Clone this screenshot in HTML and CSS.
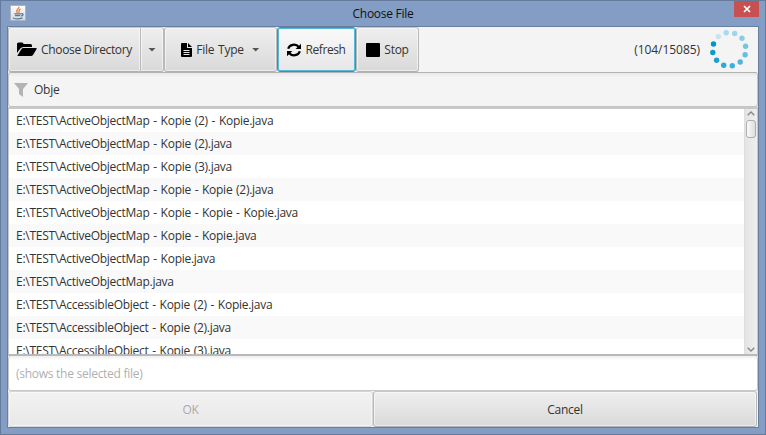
FILE: index.html
```html
<!DOCTYPE html>
<html lang="en">
<head>
<meta charset="utf-8">
<title>Choose File</title>
<link rel="stylesheet" href="styles.css">
</head>
<body>
<div class="window">
  <header class="titlebar">
    <svg class="app-icon" width="16" height="16" viewBox="0 0 16 16">
      <defs><linearGradient id="tile" x1="0" y1="0" x2="0" y2="1"><stop offset="0" stop-color="#fff"/><stop offset="1" stop-color="#d4d8dc"/></linearGradient></defs>
      <rect x=".5" y=".5" width="15" height="15" rx="1" fill="url(#tile)" stroke="#a9b4bf"/>
      <path d="M8.800 1.800C9.600 4 5 4.600 7.300 8M10.600 3.800C8 5 9.800 5.800 8.700 8" fill="none" stroke="#e8843c" stroke-width="1.300"/>
      <path d="M4.300 8.800h6.500M5 10.700h5.300M3 13c2.500 1 7 .9 9.500-.2M11 8.800c3-.8 2.500 1.800.2 2.200" fill="none" stroke="#527c9d" stroke-width="1.300"/>
    </svg>
    <h1 class="title">Choose File</h1>
    <button class="close" aria-label="Close"><svg width="8" height="8" viewBox="0 0 8 8"><path d="M1 1l6 6M7 1L1 7" stroke="#fff" stroke-width="1.700"/></svg></button>
  </header>
  <main class="content">
    <div class="toolbar">
      <button class="btn directory">
        <svg width="20" height="15" viewBox="0 0 20 15"><path d="M0 11V2Q0 .5 1.500 .5H5Q6.500.5 6.500 2H13.500Q15 2 15 3.500V5H6.500Q4.500 5 3.300 6.500Z"/><path d="M.5 13.500L4.300 7.300Q5 6 6.500 6H19Q20.300 6 19.500 7.300L16.300 12.500Q15.300 14 14 14H1Q.2 14 .5 13.500Z"/></svg>
        <span>Choose Directory</span>
      </button>
      <button class="btn arrow" aria-label="More"><i class="caret"></i></button>
      <button class="btn type">
        <svg width="11" height="14" viewBox="0 0 11 14"><path d="M0 1Q0 0 1 0H6V5H11V13Q11 14 10 14H1Q0 14 0 13Z"/><path d="M7 0L11 4H7Z"/><path d="M2.500 7.500h6M2.500 9.500h6M2.500 11.500h6" stroke="#e8e8e8"/></svg>
        <span>File Type</span><i class="caret"></i>
      </button>
      <button class="btn refresh">
        <svg width="14" height="14" viewBox="0 0 14 14"><path d="M1.200 5.800A5.900 5.300 0 0 1 11.800 4M12.800 8.200A5.900 5.300 0 0 1 2.200 10" fill="none" stroke="#000" stroke-width="2.200"/><path d="M14 .8V6H8.600ZM0 13.200V8H5.400Z"/></svg>
        <span>Refresh</span>
      </button>
      <button class="btn stop"><i class="square"></i><span>Stop</span></button>
      <span class="count">(104/15085)</span>
      <svg class="spinner" width="40" height="40" viewBox="0 0 40 40">
        <circle cx="17.200" cy="3.700" r="2.700" fill="#addaea"/>
        <circle cx="25.700" cy="4.500" r="2.700" fill="#9fd5e8"/>
        <circle cx="33" cy="9.300" r="2.700" fill="#8bcde5"/>
        <circle cx="36.600" cy="17.300" r="2.700" fill="#75c5e0"/>
        <circle cx="36.100" cy="25.800" r="2.700" fill="#65bedf"/>
        <circle cx="31.200" cy="33" r="2.700" fill="#50b5da"/>
        <circle cx="23.300" cy="36.800" r="2.700" fill="#40aed7"/>
        <circle cx="14.700" cy="36.200" r="2.700" fill="#2fa8d4"/>
        <circle cx="7.600" cy="31.300" r="2.700" fill="#1ea0d1"/>
        <circle cx="3.800" cy="23.500" r="2.700" fill="#109bce"/>
        <circle cx="4.500" cy="15" r="2.700" fill="#0096cb"/>
        <circle cx="9.300" cy="7.600" r="2.700" fill="#c5e4ee"/>
      </svg>
    </div>
    <div class="filter">
      <svg width="14" height="14" viewBox="0 0 14 14"><path d="M0 0H14L9 6V14L5 11V6Z"/></svg>
      <span>Obje</span>
    </div>
    <div class="list">
      <ul class="rows">
        <li><span>E:\TEST\ActiveObjectMap - Kopie (2) - Kopie.java</span></li>
        <li><span>E:\TEST\ActiveObjectMap - Kopie (2).java</span></li>
        <li><span>E:\TEST\ActiveObjectMap - Kopie (3).java</span></li>
        <li><span>E:\TEST\ActiveObjectMap - Kopie - Kopie (2).java</span></li>
        <li><span>E:\TEST\ActiveObjectMap - Kopie - Kopie - Kopie.java</span></li>
        <li><span>E:\TEST\ActiveObjectMap - Kopie - Kopie.java</span></li>
        <li><span>E:\TEST\ActiveObjectMap - Kopie.java</span></li>
        <li><span>E:\TEST\ActiveObjectMap.java</span></li>
        <li><span>E:\TEST\AccessibleObject - Kopie (2) - Kopie.java</span></li>
        <li><span>E:\TEST\AccessibleObject - Kopie (2).java</span></li>
        <li><span>E:\TEST\AccessibleObject - Kopie (3).java</span></li>
      </ul>
      <div class="scrollbar">
        <svg width="8" height="5" viewBox="0 0 8 5"><path d="M.7 4.300L4 1L7.300 4.300"/></svg>
        <div class="thumb"></div>
        <svg class="down" width="8" height="5" viewBox="0 0 8 5"><path d="M.7 .7L4 4L7.300 .7"/></svg>
      </div>
    </div>
    <div class="selected">(shows the selected file)</div>
    <footer class="actions">
      <button class="btn ok" disabled>OK</button>
      <button class="btn cancel">Cancel</button>
    </footer>
  </main>
</div>
</body>
</html>
```
FILE: styles.css
```css
* { box-sizing: border-box; }
body {
  margin: 0;
  font: 12px/16px "Open Sans", "Noto Sans", sans-serif;
  letter-spacing: -0.27px;
  color: #333;
}
.window {
  width: 766px;
  height: 435px;
  padding: 0 6px 6px;
  border: 1px solid #647b9b;
  background: #839dc4;
}
.titlebar {
  display: grid;
  grid-template-columns: 40px 1fr 40px;
  height: 25px;
}
.app-icon { margin: 4px 0 0 3px; }
.title {
  margin: 5px 0 0;
  text-align: center;
  font-size: 12px;
  font-weight: 400;
  line-height: 16px;
  color: #111;
}
.close {
  display: flex;
  align-items: center;
  justify-content: center;
  width: 25px;
  height: 16px;
  margin-left: 15px;
  padding: 0;
  border: 0;
  background: #c75050;
}
.content {
  display: flex;
  flex-direction: column;
  height: 402px;
  border: 1px solid #687f9f;
  background: #f4f4f4;
}
.toolbar {
  display: flex;
  align-items: center;
  height: 45px;
}
.btn {
  display: flex;
  align-items: center;
  justify-content: center;
  height: 45px;
  padding: 0;
  border: 1px solid #b9b9b9;
  border-top-color: #c7c7c7;
  border-bottom-color: #b0b0b0;
  border-radius: 3px;
  background: linear-gradient(#efefef, #d9d9d9);
  box-shadow: inset 0 0 0 1px #ffffff80;
  font: inherit;
  letter-spacing: inherit;
  color: #333;
}
.btn svg { fill: #000; }
.directory {
  width: 133px;
  gap: 4px;
  border-radius: 3px 0 0 3px;
  letter-spacing: -0.35px;
}
.arrow { width: 23px; border-left: 0; border-radius: 0 3px 3px 0; }
.type { width: 113px; gap: 4px; word-spacing: 1px; }
.type .caret { margin-left: 4px; }
.refresh {
  width: 79px;
  gap: 4px;
  border: 1px solid #169fce;
  background: linear-gradient(#fafafa, #e6e6e6);
  box-shadow: inset 0 0 0 1px #58b9db;
  letter-spacing: -0.4px;
}
.stop { width: 63px; gap: 4px; }
.caret {
  width: 8px;
  height: 4px;
  background: #555;
  clip-path: polygon(0 0, 100% 0, 50% 100%);
}
.square { width: 14px; height: 14px; border-radius: 1px; background: #000; }
.count { margin-left: auto; letter-spacing: -0.05px; }
.spinner { margin: 0 9px 1px 9px; }
.filter {
  display: flex;
  align-items: center;
  gap: 6px;
  height: 35px;
  padding: 1px 5px 0;
  border: 1px solid #c4c4c4;
  border-top-color: #b2b2b2;
  border-radius: 3px;
  background: linear-gradient(#e8e8e8, #f4f4f4 4px);
}
.filter svg { fill: #b4b4b4; }
.list {
  display: flex;
  height: 249px;
  border: 1px solid #c8c8c8;
  border-width: 2px 1px;
  border-bottom-color: #b9b9b9;
  background: #fff;
}
.rows {
  flex: 1;
  margin: 0;
  padding: 0;
  overflow: hidden;
  list-style: none;
  word-spacing: 0.9px;
}
.rows li {
  height: 23px;
  padding: 4px 7px 0;
  line-height: 16px;
  white-space: pre;
}
.rows li:nth-child(even) { background: #f9f9f9; }
.scrollbar {
  display: flex;
  flex-direction: column;
  align-items: center;
  width: 13px;
  padding: 2px 0;
  border-left: 1px solid #dedede;
  background: linear-gradient(90deg, #e4e4e4, #efefef);
}
.scrollbar svg { fill: none; stroke: #888; stroke-width: 1.4; }
.thumb {
  width: 10px;
  height: 18px;
  margin-top: 4px;
  border: 1px solid #adadad;
  border-radius: 3px;
  background: linear-gradient(90deg, #fafafa, #dedede);
}
.scrollbar .down { margin-top: auto; }
.selected {
  height: 35px;
  padding: 10px 7px 8px;
  border: 1px solid #c8c8c8;
  border-top: 0;
  border-radius: 3px;
  background: linear-gradient(#ededed, #fff 4px);
  color: #b0b0b0;
}
.actions { display: flex; }
.actions .btn { height: 36px; padding-top: 1px; }
.ok { width: 365px; }
.actions .ok {
  border-color: #d5d5d5;
  background: linear-gradient(#f2f2f2, #e8e8e8);
  color: #aaa;
}
.cancel { width: 384px; }
```
